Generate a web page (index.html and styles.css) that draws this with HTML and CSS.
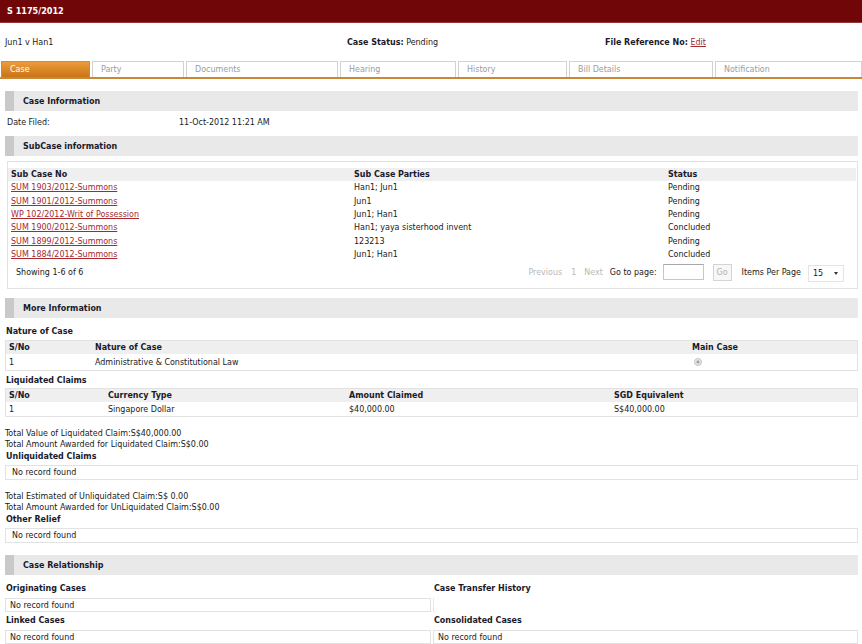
FILE: index.html
```html
<!DOCTYPE html>
<html>
<head>
<meta charset="utf-8">
<title>S 1175/2012</title>
<link rel="stylesheet" href="styles.css">
</head>
<body>
<div class="topbar"><h1>S 1175/2012</h1></div>

<div class="summary">
  <div>Jun1 v Han1</div>
  <div><b>Case Status:</b> Pending</div>
  <div><b>File Reference No:</b> <a href="#">Edit</a></div>
</div>

<div class="tabs">
  <div class="tab active">Case</div>
  <div class="tab">Party</div>
  <div class="tab">Documents</div>
  <div class="tab">Hearing</div>
  <div class="tab">History</div>
  <div class="tab">Bill Details</div>
  <div class="tab">Notification</div>
</div>

<div class="content">
  <div class="sec-head">Case Information</div>
  <div class="kv"><span class="k">Date Filed:</span><span>11-Oct-2012 11:21 AM</span></div>

  <div class="sec-head sh2">SubCase information</div>
  <div class="panel">
    <table class="grid sub">
      <thead><tr><th class="c1">Sub Case No</th><th class="c2">Sub Case Parties</th><th>Status</th></tr></thead>
      <tbody>
        <tr><td><a href="#">SUM 1903/2012-Summons</a></td><td>Han1; Jun1</td><td>Pending</td></tr>
        <tr><td><a href="#">SUM 1901/2012-Summons</a></td><td>Jun1</td><td>Pending</td></tr>
        <tr><td><a href="#">WP 102/2012-Writ of Possession</a></td><td>Jun1; Han1</td><td>Pending</td></tr>
        <tr><td><a href="#">SUM 1900/2012-Summons</a></td><td>Han1; yaya sisterhood invent</td><td>Concluded</td></tr>
        <tr><td><a href="#">SUM 1899/2012-Summons</a></td><td>123213</td><td>Pending</td></tr>
        <tr><td><a href="#">SUM 1884/2012-Summons</a></td><td>Jun1; Han1</td><td>Concluded</td></tr>
      </tbody>
    </table>
    <div class="pager">
      <span class="showing">Showing 1-6 of 6</span>
      <div class="pager-right">
        <span class="dis">Previous</span>
        <span class="dis">1</span>
        <span class="dis">Next</span>
        <span class="goto">Go to page:</span>
        <span class="input"></span>
        <span class="gobtn">Go</span>
        <span class="ipp">Items Per Page</span>
        <span class="select">15 <span class="arrow"></span></span>
      </div>
    </div>
  </div>

  <div class="sec-head sh3">More Information</div>
  <div class="label l-first">Nature of Case</div>
  <table class="grid box nature">
    <thead><tr><th class="n1">S/No</th><th class="n2">Nature of Case</th><th>Main Case</th></tr></thead>
    <tbody><tr><td>1</td><td>Administrative &amp; Constitutional Law</td><td><span class="radio"></span></td></tr></tbody>
  </table>

  <div class="label l-liq">Liquidated Claims</div>
  <table class="grid box liq">
    <thead><tr><th class="q1">S/No</th><th class="q2">Currency Type</th><th class="q3">Amount Claimed</th><th>SGD Equivalent</th></tr></thead>
    <tbody><tr><td>1</td><td>Singapore Dollar</td><td>$40,000.00</td><td>S$40,000.00</td></tr></tbody>
  </table>

  <div class="totals t1">
    <div>Total Value of Liquidated Claim:S$40,000.00</div>
    <div>Total Amount Awarded for Liquidated Claim:S$0.00</div>
  </div>
  <div class="label">Unliquidated Claims</div>
  <div class="empty">No record found</div>

  <div class="totals t2">
    <div>Total Estimated of Unliquidated Claim:S$ 0.00</div>
    <div>Total Amount Awarded for UnLiquidated Claim:S$0.00</div>
  </div>
  <div class="label">Other Relief</div>
  <div class="empty">No record found</div>

  <div class="sec-head sh4">Case Relationship</div>
  <div class="rel">
    <div class="rel-col">
      <div class="label l-rel">Originating Cases</div>
      <div class="empty e-rel">No record found</div>
      <div class="label l-rel2">Linked Cases</div>
      <div class="empty e-rel">No record found</div>
    </div>
    <div class="rel-col">
      <div class="label l-rel">Case Transfer History</div>
      <div class="stub"></div>
      <div class="label l-rel2">Consolidated Cases</div>
      <div class="empty e-rel">No record found</div>
    </div>
  </div>
</div>
</body>
</html>
```

FILE: styles.css
```css
body {
  margin: 0;
  font-family: "DejaVu Sans Condensed", "DejaVu Sans", sans-serif;
  font-size: 8.9px;
  color: #1a1a1a;
  background: #fff;
}

a { color: #a8282c; }

b, th, .label, .sec-head { font-weight: bold; color: #1a1a2a; }

.topbar {
  height: 22px;
  background: #710609;
  border-bottom: 1px solid #8e3a3a;
}
.topbar h1 {
  margin: 0;
  font-size: 9px;
  line-height: 22px;
  color: #fff;
  padding-left: 7px;
}

.summary {
  display: grid;
  grid-template-columns: 342px 258px 1fr;
  padding: 13px 0 0 5px;
  line-height: 13px;
}

.tabs {
  margin-top: 12px;
  display: grid;
  grid-template-columns: 89px 92px 152px 116px 109px 144px 1fr;
  column-gap: 2px;
  padding-left: 1px;
  border-bottom: 2px solid #c98833;
  height: 16px;
}
.tab {
  border: 1px solid #d2d2d2;
  border-bottom: none;
  color: #9c9c9c;
  line-height: 15px;
  padding-left: 8px;
  background: #fff;
}
.tab.active {
  border-color: #d88a2c;
  color: #fff;
  background: linear-gradient(#ec9c3a, #c97416);
}

.content { padding: 0 4px 0 5px; }

.sec-head {
  margin-top: 12px;
  height: 20px;
  line-height: 20px;
  background: #e9e9e9;
  border-left: 9px solid #c9c9c9;
  padding-left: 9px;
}
.sh2 { margin-top: 7px; }
.sh3 { margin-top: 9px; }
.sh4 { margin-top: 12px; }

.kv {
  display: flex;
  margin-top: 5px;
  line-height: 13px;
  padding-left: 2px;
}
.kv .k { width: 172px; }

.panel {
  margin: 5px 0 0 2px;
  border: 1px solid #e2e2e2;
  padding: 6px 1px 6px 0;
}

table.grid {
  width: 100%;
  border-collapse: collapse;
  text-align: left;
}
table.grid th {
  background: #efefef;
  padding: 0 0 0 3px;
  height: 13px;
  line-height: 13px;
}
table.grid td {
  padding: 0 0 0 3px;
  line-height: 13px;
}
.sub th { height: 13.3px; }
.sub td { height: 13.35px; }
.sub th.c1 { width: 340px; }
.sub th.c2 { width: 311px; }

.pager {
  display: flex;
  justify-content: space-between;
  align-items: center;
  height: 20px;
  margin-top: 1px;
}
.showing { padding-left: 8px; }
.pager-right {
  display: flex;
  align-items: center;
  padding-right: 12px;
}
.dis { color: #b8b8b8; margin-right: 8px; }
.dis:first-child { margin-right: 9px; }
.dis:nth-child(3) { margin-right: 7px; }
.input {
  margin-left: 6px;
  width: 39px;
  height: 14px;
  border: 1px solid #c6c6c6;
  border-top-color: #a8a8a8;
}
.gobtn {
  margin-left: 9px;
  width: 17px;
  height: 15px;
  line-height: 15px;
  text-align: center;
  border: 1px solid #d4d4d4;
  color: #b0b0b0;
  background: #f7f7f7;
}
.ipp { margin-left: 10px; }
.select {
  margin-left: 7px;
  width: 30px;
  height: 15px;
  line-height: 15px;
  padding-left: 4px;
  border: 1px solid #e4e4e4;
  position: relative;
  margin-top: 3px;
}
.select .arrow {
  position: absolute;
  right: 5px;
  top: 6px;
  border-left: 2.5px solid transparent;
  border-right: 2.5px solid transparent;
  border-top: 3px solid #333;
}

.label {
  line-height: 13px;
  padding-left: 1px;
}
.l-first { margin-top: 7px; }
.l-liq { margin-top: 3px; }

table.box {
  border: 1px solid #e2e2e2;
}
.nature { margin-top: 2px; }
.nature th { height: 13px; }
.nature td { height: 16px; }
.nature th.n1 { width: 83px; }
.nature th.n2 { width: 594px; }

.liq { margin-top: 1px; }
.liq th { height: 13px; }
.liq td { height: 14px; }
.liq th.q1 { width: 96px; }
.liq th.q2 { width: 238px; }
.liq th.q3 { width: 262px; }

.radio {
  display: inline-block;
  vertical-align: middle;
  margin-left: 2px;
  width: 6px;
  height: 6px;
  border-radius: 50%;
  border: 1px solid #c4c4c4;
  background: radial-gradient(circle, #a8a8a8 0 1.4px, #eaeaea 1.8px);
}

.totals { line-height: 11px; }
.t1 { margin-top: 11px; }
.t2 { margin-top: 11px; }

.empty {
  margin-top: 2px;
  border: 1px solid #e2e2e2;
  height: 13px;
  line-height: 13px;
  padding-left: 6px;
}

.rel {
  display: grid;
  grid-template-columns: 426px 1fr;
  column-gap: 2px;
}
.l-rel { margin-top: 7px; }
.l-rel2 { margin-top: 2px; }
.e-rel { margin-top: 3px; height: 12px; line-height: 12px; padding-left: 4px; }
.stub {
  margin-top: 3px;
  width: 1px;
  height: 14px;
  border-left: 1px solid #e6e6e6;
}
```
